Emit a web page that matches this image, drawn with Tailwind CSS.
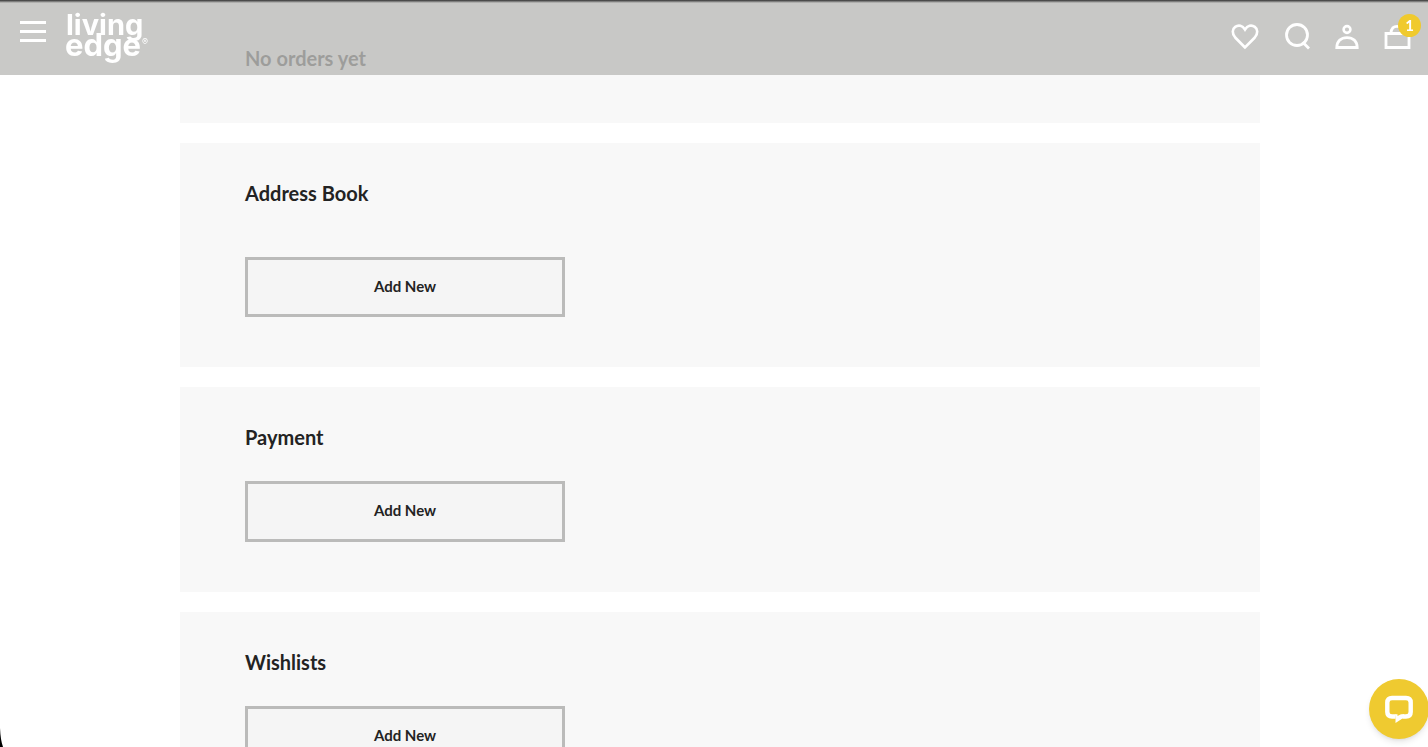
<!DOCTYPE html>
<html lang="en">
<head>
    <meta charset="UTF-8">
    <meta name="viewport" content="width=device-width, initial-scale=1.0">
    <title>My Account - Living Edge</title>
    <script src="https://cdn.jsdelivr.net/npm/@tailwindcss/browser@4"></script>
</head>
<body class="bg-white h-screen overflow-hidden text-[#232323] font-['Lato','Open_Sans',sans-serif]">
    <!-- Header -->
    <header class="fixed top-0 inset-x-0 z-10 h-[75px] bg-[#bbbbb9]/80 flex items-start justify-between pl-5 pr-[17px]">
        <div class="absolute top-0 inset-x-0 h-[3px] bg-linear-to-b from-[#333333] to-transparent"></div>
        <div class="flex items-start gap-5">
            <button type="button" aria-label="Menu" class="flex flex-col gap-[6px] mt-[21px]">
                <span class="block w-[26px] h-[3px] bg-white"></span>
                <span class="block w-[26px] h-[3px] bg-white"></span>
                <span class="block w-[26px] h-[3px] bg-white"></span>
            </button>
            <a href="#" aria-label="Living Edge">
                <svg width="86" height="70" viewBox="0 0 86 70" fill="#fff" font-family="Inter, sans-serif" font-weight="700">
                    <text x="0" y="35" font-size="29">living</text>
                    <text x="-1" y="56" font-size="31">edge</text>
                    <text x="76" y="45" font-size="9" font-weight="400">®</text>
                </svg>
            </a>
        </div>
        <nav class="flex items-start gap-[25px] mt-[22px]">
            <a href="#" aria-label="Wishlist">
                <svg width="28" height="28" viewBox="0 0 28 28" fill="none" stroke="#fff" stroke-width="2.6">
                    <path d="M14 25.500 L4.200 15.500 C0.800 11.500 1.200 7 4.200 4.900 C7.500 2.500 11.500 3.500 14 7.500 C16.500 3.500 20.500 2.500 23.800 4.900 C26.800 7 27.200 11.500 23.800 15.500 Z"/>
                </svg>
            </a>
            <a href="#" aria-label="Search">
                <svg width="26" height="28" viewBox="0 0 26 28" fill="none" stroke="#fff" stroke-width="2.800">
                    <circle cx="13" cy="13" r="10.500"/>
                    <path d="M18.500 20 L25 26.500"/>
                </svg>
            </a>
            <a href="#" aria-label="Account">
                <svg width="24" height="28" viewBox="0 0 24 28" fill="none" stroke="#fff">
                    <circle cx="12" cy="7.500" r="3.400" stroke-width="2.600"/>
                    <path d="M1.800 25.500 C2 19 6 15.600 12 15.600 C18 15.600 22 19 22.200 25.500 Z" stroke-width="2.800"/>
                </svg>
            </a>
            <a href="#" aria-label="Cart" class="relative">
                <svg width="27" height="28" viewBox="0 0 27 28" fill="none" stroke="#fff" stroke-width="2.800">
                    <path d="M2 11.500 H25 V25.500 H2 Z"/>
                    <path d="M7 11.500 C7 6 10 4.300 13 4.300 C16 4.300 19 6 19 11.500"/>
                </svg>
                <span class="absolute -top-2 left-[14px] size-[23px] rounded-full bg-[#f0ca2d] text-white text-[15px] font-bold flex items-center justify-center">1</span>
            </a>
        </nav>
    </header>

    <!-- Account sections -->
    <main class="pl-[180px] pr-[168px] flex flex-col gap-5">
        <section class="bg-[#f8f8f8] px-[65px] pt-11 pb-[51px]">
            <p class="text-xl font-bold leading-7">No orders yet</p>
        </section>

        <section class="bg-[#f8f8f8] px-[65px] pt-9 pb-[50px]">
            <h2 class="text-xl font-bold leading-7 mb-[50px]">Address Book</h2>
            <button type="button" class="block w-80 h-[60px] pb-0.5 border-3 border-[#bbbbba] bg-[#f5f5f5] text-[15px] font-bold">Add New</button>
        </section>

        <section class="bg-[#f8f8f8] px-[65px] pt-9 pb-[50px]">
            <h2 class="text-xl font-bold leading-7 mb-[30px]">Payment</h2>
            <button type="button" class="block w-80 h-[61px] pb-0.5 border-3 border-[#bbbbba] bg-[#f5f5f5] text-[15px] font-bold">Add New</button>
        </section>

        <section class="bg-[#f8f8f8] px-[65px] pt-9 pb-[50px]">
            <h2 class="text-xl font-bold leading-7 mb-[30px]">Wishlists</h2>
            <button type="button" class="block w-80 h-[61px] pb-0.5 border-3 border-[#bbbbba] bg-[#f5f5f5] text-[15px] font-bold">Add New</button>
        </section>
    </main>

    <!-- Chat -->
    <button type="button" aria-label="Open chat" class="fixed bottom-2 -right-px size-[60px] rounded-full bg-[#efca30] shadow-md flex items-center justify-center">
        <svg width="28" height="28" viewBox="0 0 28 28" fill="none">
            <path d="M10.500 21.500 H7 Q2.300 21.500 2.300 17 V7.500 Q2.300 3 7 3 H21 Q25.700 3 25.700 7.500 V17 Q25.700 21.500 21 21.500 H17.500" stroke="#fff" stroke-width="4.400"/>
            <path d="M10 19.300 H12.500 V21 L16 19.300 H19 V22.500 L10.500 28 V23 Z" fill="#fff"/>
        </svg>
    </button>

    <!-- Window corner -->
    <svg class="fixed bottom-0 left-0" width="4" height="19" viewBox="0 0 4 19">
        <path d="M0 0 Q0.500 12 3 19 H0 Z" fill="#000"/>
    </svg>
</body>
</html>
